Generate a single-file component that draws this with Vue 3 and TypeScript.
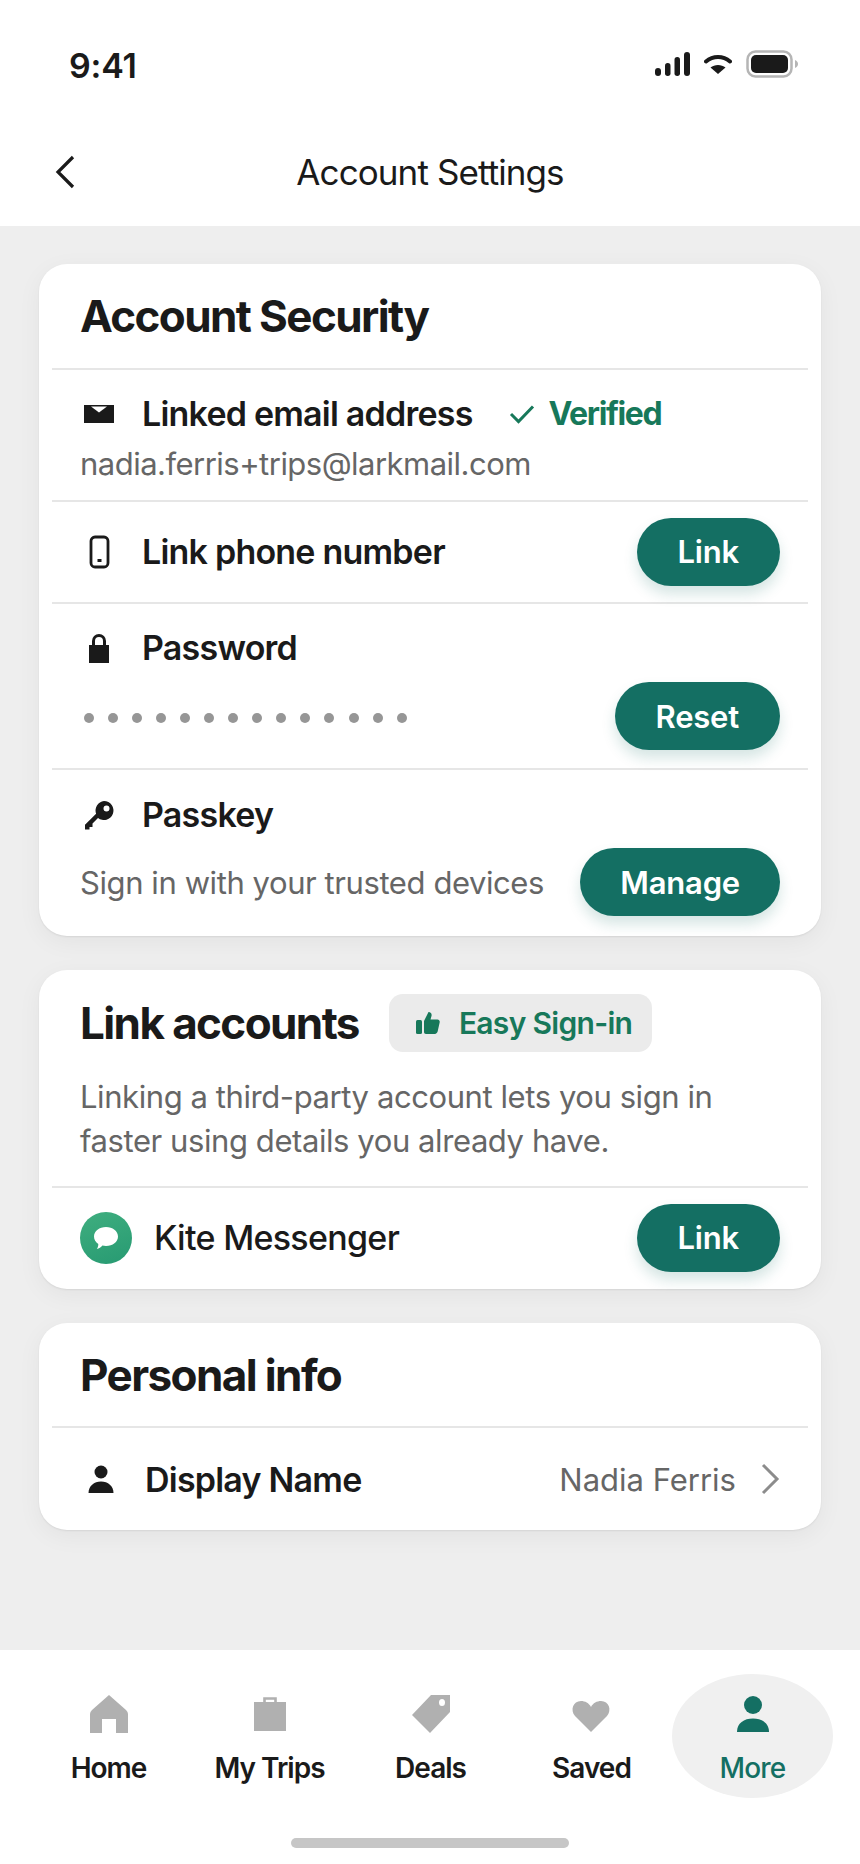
<template>
  <div class="page">
    <header class="top">
      <div class="status">
        <span class="time">9:41</span>
        <div class="status-icons">
          <svg width="35" height="24" viewBox="0 0 35 24">
            <rect x="0" y="16" width="6" height="8" rx="3" fill="#1a1a1a" />
            <rect x="10" y="11" width="5.500" height="13" rx="2.700" fill="#1a1a1a" />
            <rect x="19.500" y="5" width="5.500" height="19" rx="2.700" fill="#1a1a1a" />
            <rect x="29" y="0" width="6" height="24" rx="3" fill="#1a1a1a" />
          </svg>
          <svg width="28" height="22" viewBox="0 0 28 22">
            <path d="M2 8.500C9 2.500 19 2.500 26 8.500" fill="none" stroke="#1a1a1a" stroke-width="4" stroke-linecap="round" />
            <path d="M14 21 L6.500 14.500C10.500 11 17.500 11 21.500 14.500Z" fill="#1a1a1a" />
          </svg>
          <svg width="52" height="28" viewBox="0 0 52 28">
            <rect x="1.500" y="1.500" width="44" height="25" rx="8" fill="none" stroke="#b5b5b5" stroke-width="2.500" />
            <rect x="5" y="5" width="37" height="18" rx="5" fill="#1a1a1a" />
            <path d="M49 10c2 .8 3 2.400 3 4s-1 3.200-3 4z" fill="#b5b5b5" />
          </svg>
        </div>
      </div>
      <div class="nav">
        <svg class="back" width="24" height="36" viewBox="0 0 24 36">
          <path d="M20 3 L5 18 L20 33" fill="none" stroke="#1a1a1a" stroke-width="3.200" />
        </svg>
        <h1 class="nav-title">Account Settings</h1>
      </div>
    </header>

    <main class="body">
      <section class="card">
        <h2 class="card-title head-row">Account Security</h2>
        <div class="item email">
          <div class="line">
            <svg class="ic" width="32" height="32" viewBox="0 0 32 32">
              <path d="M1 7h30v18H1z" fill="#1a1a1a" />
              <path d="M8 8.500h16L16 14.500z" fill="#fff" />
            </svg>
            <span class="label">Linked email address</span>
            <svg class="check" width="26" height="20" viewBox="0 0 26 20">
              <path d="M2 10l7.500 7.500L24 2.500" fill="none" stroke="#17785a" stroke-width="3" />
            </svg>
            <span class="verified">Verified</span>
          </div>
          <p class="sub mail">nadia.ferris+trips@larkmail.com</p>
        </div>
        <div class="item phone">
          <div class="line">
            <svg class="ic" width="32" height="36" viewBox="0 0 32 36">
              <rect x="8" y="3" width="17" height="30" rx="4" fill="none" stroke="#1a1a1a" stroke-width="2.800" />
              <rect x="14.500" y="25" width="4" height="3" fill="#1a1a1a" />
            </svg>
            <span class="label">Link phone number</span>
          </div>
          <button class="btn">Link</button>
        </div>
        <div class="item pass">
          <div class="line">
            <svg class="ic" width="32" height="34" viewBox="0 0 32 34">
              <path d="M10.500 15V10a5.500 5.500 0 0 1 11 0v5" fill="none" stroke="#1a1a1a" stroke-width="3" />
              <rect x="6" y="14" width="20" height="18" fill="#1a1a1a" />
            </svg>
            <span class="label">Password</span>
          </div>
          <div class="line split">
            <div class="dots"><i v-for="n in 14" :key="n" class="dot"></i></div>
            <button class="btn">Reset</button>
          </div>
        </div>
        <div class="item key">
          <div class="line">
            <svg class="ic" width="32" height="32" viewBox="0 0 32 32">
              <path fill="#1a1a1a" fill-rule="evenodd" d="M21 2a9.500 9.500 0 1 1-6 16.900L9.500 24.500V28h-3v2.500H2V25.800L13.100 14.700A9.500 9.500 0 0 1 21 2zm2.500 4.500a3 3 0 1 0 0 6 3 3 0 0 0 0-6z" />
            </svg>
            <span class="label">Passkey</span>
          </div>
          <div class="line split">
            <p class="sub">Sign in with your trusted devices</p>
            <button class="btn manage">Manage</button>
          </div>
        </div>
      </section>

      <section class="card">
        <div class="accounts-head">
          <h2 class="card-title">Link accounts</h2>
          <span class="badge">
            <svg width="26" height="26" viewBox="0 0 26 26">
              <rect x="1" y="10" width="6" height="14" rx="1.500" fill="#17785a" />
              <path d="M9 11l4.500-9c2.500 0 3.500 2 3 4l-1 3.500h7c1.500 0 2.500 1.300 2.200 2.800l-2 9c-.3 1.300-1.300 2.700-3 2.700H11c-1.200 0-2-1-2-2z" fill="#17785a" />
            </svg>
            Easy Sign-in
          </span>
        </div>
        <p class="desc">Linking a third-party account lets you sign in faster using details you already have.</p>
        <div class="item kite">
          <div class="line">
            <div class="logo">
              <svg width="26" height="24" viewBox="0 0 26 24">
                <path d="M13 1c6.600 0 12 4.100 12 9.500S19.600 20 13 20c-1.300 0-2.500-.2-3.600-.5C8 21.200 6 22.500 3.800 23c1-1.400 1.500-3 1.500-5C2.700 16.200 1 13.500 1 10.500 1 5.100 6.400 1 13 1z" fill="#fff" />
              </svg>
            </div>
            <span class="label kite-name">Kite Messenger</span>
          </div>
          <button class="btn">Link</button>
        </div>
      </section>

      <section class="card">
        <h2 class="card-title info-head">Personal info</h2>
        <div class="item name">
          <div class="line">
            <svg class="ic person" width="32" height="32" viewBox="0 0 32 32">
              <circle cx="16" cy="9" r="6.500" fill="#1a1a1a" />
              <path d="M3.500 30c0-7 5.500-11.500 12.500-11.500S28.500 23 28.500 30z" fill="#1a1a1a" />
            </svg>
            <span class="label">Display Name</span>
          </div>
          <div class="value">
            <span>Nadia Ferris</span>
            <svg width="20" height="32" viewBox="0 0 20 32">
              <path d="M3 2l14 14L3 30" fill="none" stroke="#8c8c8c" stroke-width="3" />
            </svg>
          </div>
        </div>
      </section>
    </main>

    <footer class="tabbar">
      <div class="tabs">
        <div v-for="t in tabs" :key="t.name" class="tab" :class="{ active: t.name === 'More' }">
          <svg width="44" height="44" viewBox="0 0 44 44" v-html="t.icon"></svg>
          <span>{{ t.name }}</span>
        </div>
      </div>
      <div class="home-bar"></div>
    </footer>
  </div>
</template>

<script setup lang="ts">
const grey = '#b0b0b0'
const green = '#146f63'

const tabs = [
  { name: 'Home', icon: `<path fill="${grey}" d="M22 2L39 17Q41 19 41 21V40H29V26H15V40H3V21Q3 19 5 17Z"/>` },
  { name: 'My Trips', icon: `<path fill="${grey}" d="M6 9h32v29H6z"/><path d="M16.500 10V5.500h11V10" fill="none" stroke="${grey}" stroke-width="2.600"/>` },
  { name: 'Deals', icon: `<path fill="${grey}" fill-rule="evenodd" d="M22 2H41V19L21 40L3 22ZM33 6a3 3.500 0 1 0 0 7 3 3.500 0 0 0 0-7z"/>` },
  { name: 'Saved', icon: `<path fill="${grey}" d="M21 39 5 23C0 17 3 8 11 8c4 0 8 2 10 6 2-4 6-6 10-6 8 0 11 9 6 15z"/>` },
  { name: 'More', icon: `<circle cx="22" cy="12" r="9" fill="${green}"/><path d="M6 39c0-9 7-13.500 16-13.500S38 30 38 39z" fill="${green}"/>` }
]
</script>

<style>
html, body { margin: 0; background: #fff; }
</style>

<style scoped>
.page {
  width: 860px;
  min-height: 1864px;
  display: flex;
  flex-direction: column;
  background: #eeeeee;
  font-family: Inter, "Liberation Sans", sans-serif;
  color: #1a1a1a;
}

/* header */
.top { background: #fff; height: 226px; }
.status { height: 130px; padding: 0 62px 0 69px; display: flex; justify-content: space-between; align-items: center; }
.time { font-size: 34px; font-weight: 600; letter-spacing: -.2px; }
.status-icons { display: flex; align-items: center; gap: 14px; margin-top: -2px; }
.nav { position: relative; height: 96px; display: flex; align-items: center; justify-content: center; }
.back { position: absolute; left: 53px; top: 24px; }
.nav-title { margin: -12px 0 0; font-size: 35px; font-weight: 400; letter-spacing: -.9px; }

/* cards */
.body { flex: 1; padding: 38px 39px 0; display: flex; flex-direction: column; gap: 34px; }
.card { background: #fff; border-radius: 28px; padding: 0 13px; box-shadow: 0 6px 24px rgba(0,0,0,.05), 0 1px 2px rgba(0,0,0,.07); }
.card-title { margin: 0; font-size: 44px; font-weight: 700; letter-spacing: -1.6px; }
.head-row { height: 104px; padding-left: 28px; display: flex; align-items: center; }
.item { border-top: 2px solid #e6e6e6; padding: 0 28px; box-sizing: border-box; }
.line { display: flex; align-items: center; }
.ic { width: 32px; flex: none; margin: 0 27px 0 3px; }
.label { font-size: 34px; font-weight: 600; letter-spacing: -.78px; }
.sub { margin: 0; font-size: 31px; letter-spacing: -.42px; color: #666; }
.sub.mail { letter-spacing: -.52px; }
.check { margin: 0 14px 0 36px; }
.verified { font-size: 32px; font-weight: 700; letter-spacing: -1.4px; color: #17785a; }
.split { justify-content: space-between; }
.btn {
  border: none;
  height: 68px;
  padding: 0 41px;
  border-radius: 34px;
  background: #146f63;
  color: #fff;
  font: 600 31px Inter, "Liberation Sans", sans-serif;
  letter-spacing: -.2px;
  box-shadow: 0 8px 14px rgba(20,111,99,.18);
}
.btn.manage { padding: 0 40px; }

.email { height: 132px; padding-top: 23px; }
.email .sub { margin-top: 11px; }
.phone { height: 102px; padding-bottom: 1px; display: flex; align-items: center; justify-content: space-between; }
.pass { height: 166px; padding-top: 23px; }
.pass .split { margin-top: 14px; }
.key { height: 168px; padding-top: 24px; }
.key .split { margin-top: 13px; }
.dots { display: flex; gap: 14.050px; padding: 4px 0 0 4px; }
.dot { width: 10px; height: 10px; border-radius: 50%; background: #969696; }

.accounts-head { display: flex; align-items: center; gap: 30px; padding: 24px 0 0 28px; }
.badge {
  height: 58px;
  width: 263px;
  box-sizing: border-box;
  padding-left: 26px;
  display: flex;
  align-items: center;
  gap: 18px;
  border-radius: 14px;
  background: #ebebeb;
  color: #17785a;
  font-size: 30px;
  font-weight: 600;
  letter-spacing: -.7px;
}
.desc { margin: 0; padding: 23px 60px 0 28px; font-size: 31px; line-height: 44px; letter-spacing: -.42px; color: #666; height: 111px; }
.kite { height: 103px; padding-bottom: 2px; display: flex; align-items: center; justify-content: space-between; }
.logo { width: 52px; height: 52px; border-radius: 50%; background: linear-gradient(160deg, #3fae7f, #279a72); display: flex; align-items: center; justify-content: center; margin-right: 22px; }
.kite-name { font-weight: 500; letter-spacing: -.7px; }

.info-head { height: 103px; padding-left: 28px; display: flex; align-items: center; }
.name { height: 104px; display: flex; align-items: center; justify-content: space-between; }
.ic.person { margin: 0 28px 0 5px; }
.value { display: flex; align-items: center; gap: 24px; font-size: 31px; color: #666; }

/* bottom */
.tabbar { height: 214px; background: #fff; position: relative; }
.tabs { display: grid; grid-template-columns: repeat(5, 161px); padding: 24px 0 0 28px; }
.tab { height: 124px; box-sizing: border-box; padding-top: 19px; display: flex; flex-direction: column; align-items: center; gap: 14px; font-size: 28px; font-weight: 600; letter-spacing: -1px; border-radius: 50%; }
.tab.active { background: #f0f0f0; color: #146f63; font-weight: 500; letter-spacing: -.8px; }
.home-bar { width: 278px; height: 10px; border-radius: 5px; background: #c6c6c6; margin: 40px auto 0; }
</style>
